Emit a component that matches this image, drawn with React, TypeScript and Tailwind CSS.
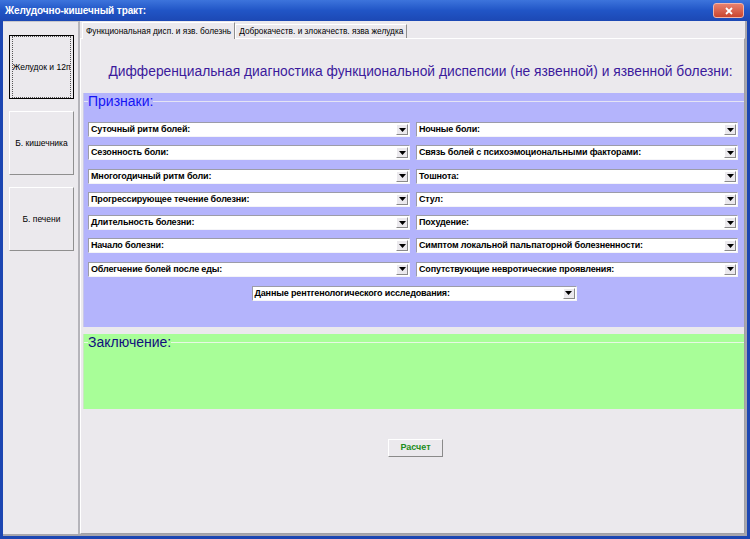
const LEFT_ITEMS = [
  "Суточный ритм болей:",
  "Сезонность боли:",
  "Многогодичный ритм боли:",
  "Прогрессирующее течение болезни:",
  "Длительность болезни:",
  "Начало болезни:",
  "Облегчение болей после еды:",
];

const RIGHT_ITEMS = [
  "Ночные боли:",
  "Связь болей с психоэмоциональными факторами:",
  "Тошнота:",
  "Стул:",
  "Похудение:",
  "Симптом локальной пальпаторной болезненности:",
  "Сопутствующие невротические проявления:",
];

function Combo({ label, className = "" }: { label: string; className?: string }) {
  return (
    <div
      className={
        "flex h-[15px] border border-t-[#9c9ca8] border-l-[#9c9ca8] border-r-[#f4f4f8] border-b-[#f4f4f8] bg-white " +
        className
      }
    >
      <div className="flex-1 overflow-hidden whitespace-nowrap pl-[2px] text-[9px] font-bold leading-[13px] tracking-[-0.15px] text-black">
        {label}
      </div>
      <div className="m-[1px] flex w-[12px] items-center justify-center border border-t-white border-l-white border-r-[#8a8a8a] border-b-[#8a8a8a] bg-[#ebe9ed]">
        <svg width="7" height="4" viewBox="0 0 7 4">
          <path d="M0 0h7L3.5 4z" fill="#000" />
        </svg>
      </div>
    </div>
  );
}

function SideButton({ label, active = false }: { label: string; active?: boolean }) {
  return (
    <div
      className={
        "flex h-[64px] w-[65px] items-center justify-center bg-[#ebe9ed] " +
        (active
          ? "border border-black"
          : "border border-t-white border-l-white border-r-[#8f8f8f] border-b-[#8f8f8f]")
      }
    >
      <div
        className={
          "flex h-full w-full items-center justify-center overflow-hidden whitespace-nowrap text-[8.5px] text-black " +
          (active ? "m-[2px] border border-dotted border-[#555]" : "")
        }
      >
        {label}
      </div>
    </div>
  );
}

export default function App() {
  return (
    <div className="flex h-[539px] w-[750px] flex-col bg-[#1c46b2] font-['Liberation_Sans','DejaVu_Sans',sans-serif]">
      {/* title bar */}
      <div className="flex h-[21px] items-center justify-between bg-gradient-to-b from-[#3d74dc] via-[#2155c6] to-[#1c48b4] pl-[5px] pr-[6px]">
        <span className="text-[10px] font-bold tracking-[-0.1px] text-white">Желудочно-кишечный тракт:</span>
        <div className="flex h-[15px] w-[31px] items-center justify-center rounded-[3px] border border-[#f2b4a8] bg-gradient-to-b from-[#e8806e] to-[#c9452f]">
          <svg width="8" height="8" viewBox="0 0 8 8">
            <path d="M1 1l6 6M7 1l-6 6" stroke="#fff" strokeWidth="1.8" />
          </svg>
        </div>
      </div>

      <div className="mx-[3px] mb-[3px] flex flex-1 border-b-[2px] border-r-[2px] border-b-[#a7a6ad] border-r-[#a7a6ad] bg-[#ebe9ed]">
        {/* left panel */}
        <div className="flex w-[77px] flex-col items-start gap-[12px] border-r-[2px] border-t border-r-[#b5b4ba] border-t-[#c8c7cc] pl-[6px] pt-[13px]">
          <SideButton label="Желудок и 12п" active />
          <SideButton label="Б. кишечника" />
          <SideButton label="Б. печени" />
        </div>

        {/* tabs */}
        <div className="flex flex-1 flex-col pt-[1px]">
          <div className="flex h-[16px] items-end pl-[2px]">
            <div className="z-10 -mb-px flex h-[17px] items-center border border-b-0 border-l-white border-t-white border-r-[#8f8f8f] bg-[#ebe9ed] px-[3px] text-[8.3px] text-black">
              Функциональная дисп. и язв. болезнь
            </div>
            <div className="flex h-[14px] items-center border border-b-0 border-l-white border-t-white border-r-[#8f8f8f] px-[3px] text-[8.3px] text-black">
              Доброкачеств. и злокачеств. язва желудка
            </div>
          </div>
          <div className="flex flex-1 flex-col border border-l-white border-t-white border-r-[#a0a0a6] border-b-[#a0a0a6] pl-[2px]">
            <div className="flex h-[54px] items-center justify-center pl-[14px] pt-[13px] text-[13.8px] text-[#3b1a9c]">
              Дифференциальная диагностика функциональной диспепсии (не язвенной) и язвенной болезни:
            </div>

            {/* признаки */}
            <div className="flex h-[234px] flex-col border-l border-l-[#c8c8e8] bg-[#b4b4fc]">
              <div className="mt-[1px] flex h-[14px] items-center">
                <span className="h-px w-[4px] bg-[#e4e4f4]" />
                <span className="text-[14px] leading-[14px] text-[#1414f4]">Признаки:</span>
                <span className="h-px flex-1 bg-[#e4e4f4]" />
              </div>
              <div className="mt-[14px] grid grid-cols-2 gap-x-[6px] gap-y-[8.3px] pl-[4px] pr-[6px]">
                {LEFT_ITEMS.map((l, i) => (
                  <div key={l} className="contents">
                    <Combo label={l} />
                    <Combo label={RIGHT_ITEMS[i]} />
                  </div>
                ))}
              </div>
              <div className="mt-[9px] flex justify-center">
                <Combo label="Данные рентгенологического исследования:" className="w-[325px]" />
              </div>
            </div>

            {/* заключение */}
            <div className="mt-[7px] flex h-[75px] flex-col border-l border-l-[#c8e8c0] bg-[#a8fe98]">
              <div className="mt-[1px] flex h-[14px] items-center">
                <span className="h-px w-[4px] bg-[#e8f8e4]" />
                <span className="text-[14px] leading-[14px] text-[#10107c]">Заключение:</span>
                <span className="h-px flex-1 bg-[#e8f8e4]" />
              </div>
            </div>

            <div className="mt-[30px] flex justify-center pl-[4px]">
              <div className="flex h-[18px] w-[55px] items-center justify-center border border-l-white border-t-white border-r-[#8a8a8a] border-b-[#8a8a8a] bg-[#ebe9ed] text-[9px] font-bold text-[#1c8c1c]">
                Расчет
              </div>
            </div>
          </div>
        </div>
      </div>
    </div>
  );
}
